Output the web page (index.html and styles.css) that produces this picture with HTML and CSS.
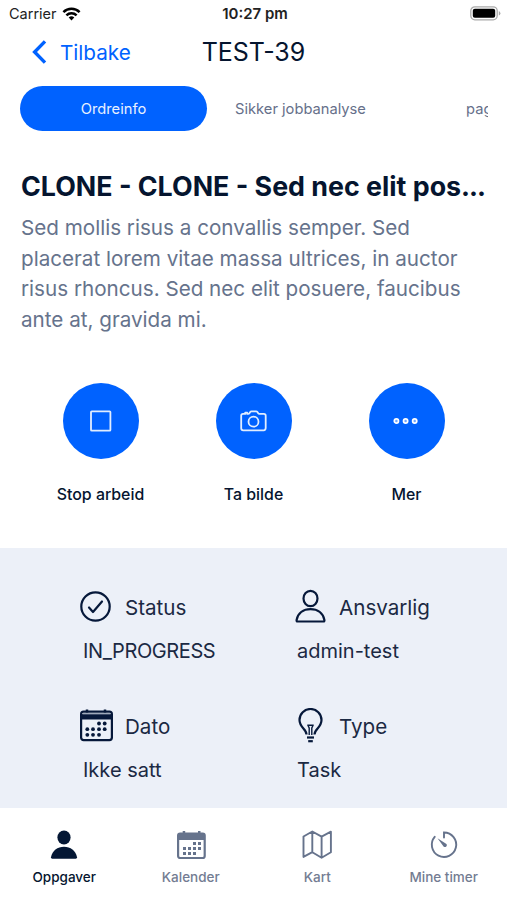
FILE: index.html
```html
<!DOCTYPE html>
<html lang="no">
<head>
<meta charset="utf-8">
<meta name="viewport" content="width=device-width, initial-scale=1">
<title>TEST-39</title>
<link rel="stylesheet" href="styles.css">
</head>
<body>
<div class="screen">
  <div class="status-bar">
    <div class="carrier"><span>Carrier</span>
      <svg class="wifi" width="19" height="14" viewBox="0 0 18 14" fill="none" stroke="#000" stroke-width="2.5"><path d="M.9 5.1a11.6 11.6 0 0 1 16.2 0M3.9 8.3a7.3 7.3 0 0 1 10.2 0"/><path d="M9 13.4 6.2 10.5a4 4 0 0 1 5.6 0Z" fill="#000" stroke="none"/></svg>
    </div>
    <span class="clock">10:27 pm</span>
    <svg class="battery" width="31" height="15" viewBox="0 0 31 15"><rect x=".8" y=".8" width="26.4" height="13" rx="4" fill="#fff" stroke="#aaa" stroke-width="1.3"/><rect x="2.8" y="2.8" width="22.4" height="9" rx="2" fill="#000"/><path d="M28.8 5v4.600q1.600-.7 1.600-2.300T28.800 5Z" fill="#aaa"/></svg>
  </div>
  <header class="header">
    <a class="back"><svg width="15" height="24" viewBox="0 0 15 24" fill="none" stroke="#0062ff" stroke-width="3.400"><path d="M13 1.400 2.600 12 13 22.600"/></svg><span>Tilbake</span></a>
    <h1 class="page-title">TEST-39</h1>
    <span></span>
  </header>
  <nav class="tabs">
    <a class="tab tab-active"><span>Ordreinfo</span></a>
    <a class="tab"><span>Sikker jobbanalyse</span></a>
    <a class="tab tab-cut"><span>page3</span></a>
  </nav>
  <section class="summary">
    <h2 class="title">CLONE - CLONE - Sed nec elit pos<span class="ellipsis">...</span></h2>
    <p class="description">Sed mollis risus a convallis semper. Sed<br>placerat lorem vitae massa ultrices, in auctor<br>risus rhoncus. Sed nec elit posuere, faucibus<br>ante at, gravida mi.</p>
  </section>
  <section class="actions">
    <div class="action"><span class="circle"><svg width="30" height="30" viewBox="0 0 30 30" fill="none" stroke="#e0edff" stroke-width="1.800"><rect x="5" y="5.300" width="19.400" height="19.400" rx=".8"/></svg></span><span>Stop arbeid</span></div>
    <div class="action"><span class="circle"><svg width="30" height="30" viewBox="0 0 30 30" fill="none" stroke="#e0edff" stroke-width="1.800" stroke-linejoin="round"><path d="M4 7.900h2.200V6.700h2v1.200h1q.8 0 1.200-.7l.8-1.200q.5-.7 1.300-.7h4.600q.8 0 1.300.7l.8 1.200q.4.700 1.200.7h4.400q1.900 0 1.900 1.900v12q0 2.500-2 2.500H4.200q-2 0-2-2V9.700q0-1.800 1.800-1.800Z"/><circle cx="14.500" cy="15.700" r="5"/></svg></span><span>Ta bilde</span></div>
    <div class="action"><span class="circle"><svg width="30" height="30" viewBox="0 0 30 30" fill="#70a6ff" stroke="#fff" stroke-width="1.700"><circle cx="4.400" cy="15" r="2.100"/><circle cx="13.600" cy="15" r="2.100"/><circle cx="22.700" cy="15" r="2.100"/></svg></span><span>Mer</span></div>
  </section>
  <section class="details">
    <div class="detail">
      <div class="detail-head"><svg width="36" height="36" viewBox="0 0 36 36" fill="none" stroke="#06183a" stroke-width="2.200"><circle cx="17.500" cy="17.500" r="14.200"/><path d="m11 18.500 4 4.500 9-10.500" stroke-linecap="round" stroke-linejoin="round"/></svg><span>Status</span></div>
      <div class="detail-value value-code">IN_PROGRESS</div>
    </div>
    <div class="detail">
      <div class="detail-head"><svg width="36" height="36" viewBox="0 0 36 36" fill="none" stroke="#06183a" stroke-width="2.200"><ellipse cx="18.500" cy="9.500" rx="7" ry="7.700"/><path d="M5.500 32.500H31.500Q32.600 32.500 32.400 31C31 24 25.500 20.200 18.500 20.200S6 24 4.600 31Q4.400 32.500 5.500 32.500Z"/></svg><span>Ansvarlig</span></div>
      <div class="detail-value">admin-test</div>
    </div>
    <div class="detail">
      <div class="detail-head"><svg width="36" height="36" viewBox="0 0 36 36"><rect x="3.100" y="3.700" width="30.800" height="28.400" rx="2.500" fill="none" stroke="#06183a" stroke-width="2.200"/><path d="M4 6h29v5.500H4Z" fill="#06183a"/><path d="M4.500 5.200h28v1.200h-28Z" fill="#8d99ac"/><path d="M9 1.500v3M27 1.500v3" stroke="#06183a" stroke-width="2.500"/><g fill="#06183a"><circle cx="21" cy="15.500" r="1.900"/><circle cx="26.700" cy="15.500" r="1.900"/><circle cx="9.300" cy="21.200" r="1.900"/><circle cx="15" cy="21.200" r="1.900"/><circle cx="21" cy="21.200" r="1.900"/><circle cx="26.700" cy="21.200" r="1.900"/><circle cx="9.300" cy="26.800" r="1.900"/><circle cx="15" cy="26.800" r="1.900"/><circle cx="21" cy="26.800" r="1.900"/></g></svg><span>Dato</span></div>
      <div class="detail-value">Ikke satt</div>
    </div>
    <div class="detail">
      <div class="detail-head"><svg width="36" height="36" viewBox="0 0 36 36" fill="none" stroke="#06183a" stroke-width="2.200"><path d="M14.500 26.500c0-5.500-7-7-7-14.500a11 11 0 0 1 22 0c0 7.500-7 9-7 14.500"/><path d="M15.300 17.300h6.400M17.200 27v-7l-1.200-2.500M19.800 27v-7l1.200-2.500" stroke-width="1.400"/><path d="M15 29.500h7" stroke-width="2.200"/><path d="M16.200 33.200h4.600" stroke-width="2.200"/></svg><span>Type</span></div>
      <div class="detail-value">Task</div>
    </div>
  </section>
  <nav class="bottom-nav">
    <a class="nav-item nav-active"><svg width="30" height="30" viewBox="0 0 30 30" fill="#041734"><ellipse cx="15" cy="7.500" rx="6.600" ry="7"/><path d="M3.300 28.700q-1.500 0-1.300-1.400C3.300 20.200 8.500 16.700 15 16.700s11.700 3.500 13 10.600Q28.200 28.700 26.700 28.700Z"/></svg><span>Oppgaver</span></a>
    <a class="nav-item"><svg width="30" height="30" viewBox="0 0 30 30"><rect x="2.100" y="3.600" width="26.600" height="24.400" rx="2" fill="none" stroke="#66738c" stroke-width="2.200"/><path d="M2 4h27v6H2ZM6.700 1h2.500v3H6.700ZM22 1h2.500v3H22Z" fill="#66738c"/><path d="M17 12h3v3h-3Zm5 0h3v3h-3ZM7 17h3v3H7Zm5 0h3v3h-3Zm5 0h3v3h-3Zm5 0h3v3h-3ZM7 22h3v3H7Zm5 0h3v3h-3Zm5 0h3v3h-3Z" fill="#66738c"/></svg><span>Kalender</span></a>
    <a class="nav-item"><svg width="30" height="30" viewBox="0 0 30 30" fill="none" stroke="#66738c" stroke-width="1.900" stroke-linejoin="round"><path d="m1.500 6.500 8.800-5 9.300 5.200 9.300-5V22.200L19.600 27.700l-9.300-5.500-8.800 4.700ZM10.300 1.500v20.700M19.600 6.700v21"/></svg><span>Kart</span></a>
    <a class="nav-item"><svg width="30" height="30" viewBox="0 0 30 30" fill="none" stroke="#66738c" stroke-width="1.900" stroke-linecap="round"><path d="M15 7.500V2.500A12.200 12.200 0 1 1 5.700 6.800"/><path d="m8.500 8.300 8.200 5.100a1.900 1.900 0 1 1-2.500 2.500Z" fill="#66738c" stroke="none"/></svg><span>Mine timer</span></a>
  </nav>
</div>
</body>
</html>
```
FILE: styles.css
```css
* { box-sizing: border-box; }
body { margin: 0; background: #fff; font-family: Inter, "Liberation Sans", sans-serif; color: #05152f; }
svg { display: block; flex: none; }
.screen { width: 507px; height: 900px; display: flex; flex-direction: column; overflow: hidden; }
.status-bar { height: 27px; padding: 0 6px 0 9px; display: grid; grid-template-columns: 1fr auto 1fr; align-items: center; font-size: 14.500px; color: #222; }
.carrier { display: flex; align-items: center; gap: 5px; }
.clock { font-weight: 600; font-size: 15px; }
.battery { justify-self: end; }
.header { height: 50px; padding: 0 32px; display: grid; grid-template-columns: 1fr auto 1fr; align-items: center; }
.back { display: flex; align-items: center; gap: 13px; color: #0062ff; font-size: 20.700px; }
.page-title { margin: 0; font-weight: 400; font-size: 25px; }
.tabs { margin: 9px 19px 0 20px; height: 45px; display: flex; overflow: hidden; font-size: 14.700px; color: #66708a; }
.tab { width: 187px; flex: none; display: flex; align-items: center; justify-content: center; }
.tab-active { background: #0062ff; color: #e8f1ff; border-radius: 23px; }
.tab-cut { justify-content: flex-start; padding-left: 72px; }
.summary { padding: 39px 20px 0 21px; height: 252px; }
.title { margin: 0; font-size: 26.800px; line-height: 32px; font-weight: 700; white-space: nowrap; }
.ellipsis { letter-spacing: -1px; }
.description { margin: 11px 0 0; font-size: 20.650px; line-height: 30.600px; color: #66738c; white-space: nowrap; }
.actions { height: 165px; padding: 0 24px; display: grid; grid-template-columns: repeat(3, 1fr); }
.action { display: flex; flex-direction: column; align-items: center; gap: 25px; font-size: 15.900px; line-height: 21px; font-weight: 500; }
.circle { width: 76px; height: 76px; border-radius: 50%; background: #0062ff; display: flex; align-items: center; justify-content: center; }
.details { height: 260px; background: #ecf0f8; padding: 41px 0 0 78px; display: grid; grid-template-columns: 214px 1fr; grid-template-rows: 119px 119px; color: #1b2943; font-size: 20.600px; }
.detail-head { display: flex; align-items: center; gap: 11px; height: 36px; }
.detail-value { padding: 13px 0 0 5px; line-height: 27px; font-size: 20px; }
.value-code { letter-spacing: -.4px; }
.bottom-nav { height: 92px; display: grid; grid-template-columns: repeat(4, 1fr); padding: 22px 0 0 1px; }
.nav-item { display: flex; flex-direction: column; align-items: center; gap: 8px; font-size: 13.500px; line-height: 18px; font-weight: 500; color: #737c92; }
.nav-active { color: #05152f; }
```
